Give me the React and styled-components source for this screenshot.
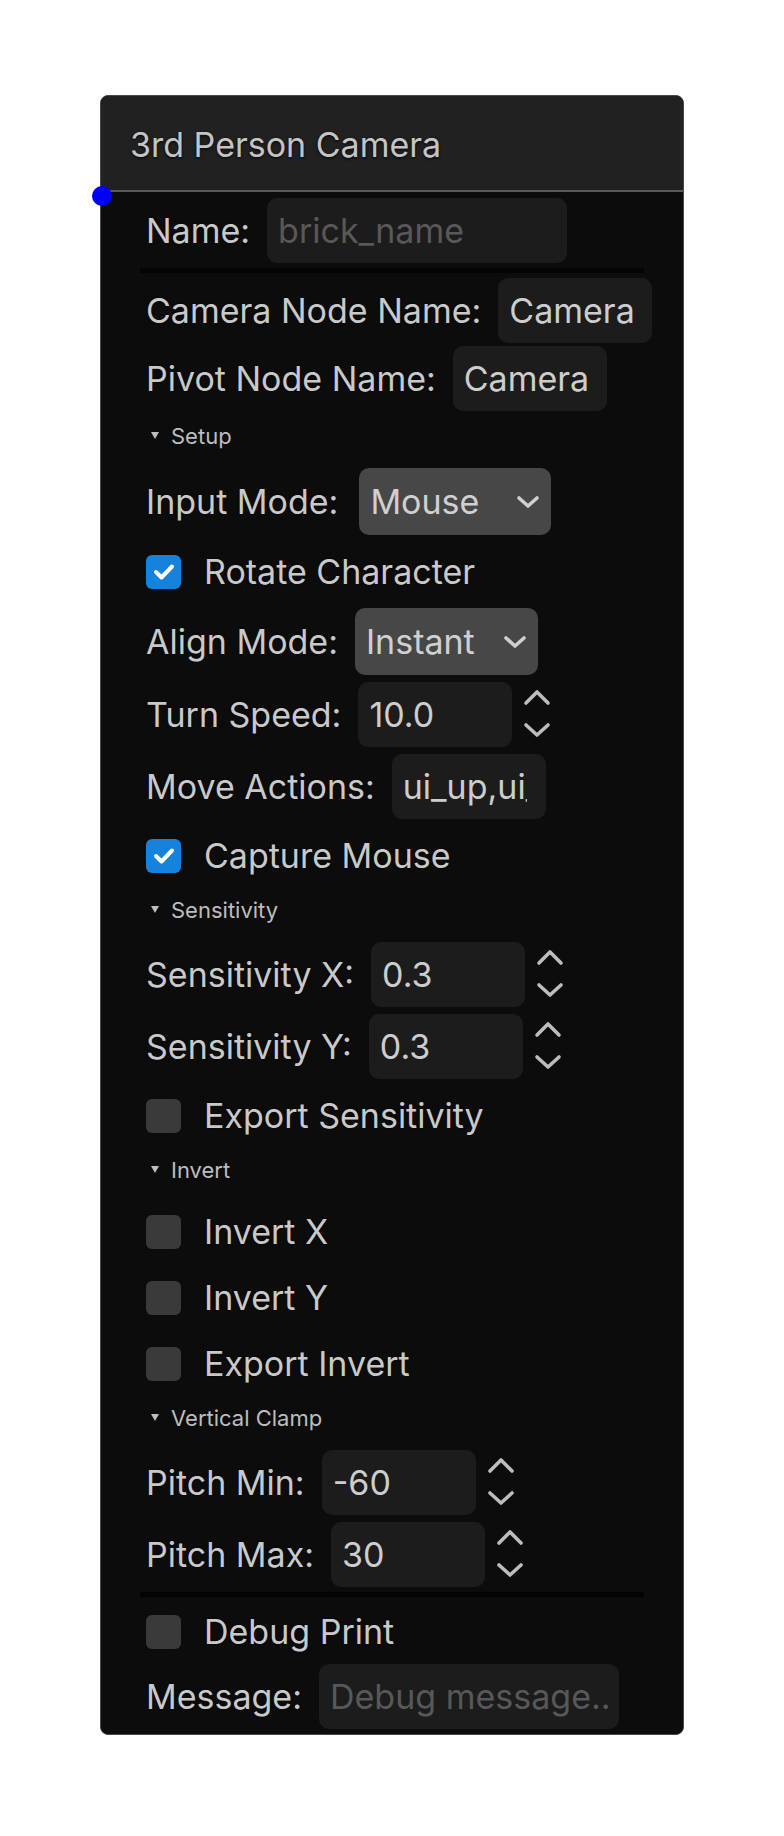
import React from 'react'
import styled, { createGlobalStyle } from 'styled-components'

const GlobalStyle = createGlobalStyle`
    body {
        margin: 0;
        background: #fff;
        font-family: Inter, "Noto Sans", sans-serif;
    }
`

const Page = styled.div`
    padding: 95px 0 0 100px;
`

const Panel = styled.div`
    position: relative;
    width: 582px;
    border: 1px solid #4a4a4a;
    border-radius: 8px;
    background: #0c0c0c;
`

const Header = styled.div`
    height: 96px;
    box-sizing: border-box;
    display: flex;
    align-items: center;
    padding: 3px 0 0 29px;
    background: #212121;
    border-bottom: 2px solid #5a5a5a;
    border-radius: 7px 7px 0 0;

    color: #c4c4c4;
    font-size: 34px;
    text-shadow: 0 1px 3px rgba(0, 0, 0, 0.9);
`

const Handle = styled.span`
    position: absolute;
    left: -9px;
    top: 90px;
    width: 20px;
    height: 20px;
    border-radius: 50%;
    background: #0000ff;
`

const Body = styled.div`
    display: flex;
    flex-direction: column;
    gap: 7px;
    padding: 6px 45px 5px;
`

const Group = styled.div`
    display: flex;
    flex-direction: column;
    gap: 3px;
`

const Divider = styled.div`
    height: 5px;
    margin: -2px -6px;
    background: #040404;
`

const Row = styled.div`
    height: ${p => p.$h || 65}px;
    display: flex;
    align-items: center;
    gap: ${p => (p.$tight ? 0 : 17)}px;
    white-space: nowrap;
`

const Label = styled.span`
    margin-left: ${p => p.$ml || 0}px;
    color: #c9c9c9;
    font-size: 34px;
    text-shadow: 0 0 2px rgba(0, 0, 0, 0.8);
`

const Field = styled.input`
    box-sizing: border-box;
    width: ${p => p.$w || 154}px;
    height: 65px;
    padding: 0 ${p => p.$pr || 19}px 0 11px;
    border: none;
    border-radius: 10px;
    outline: none;
    background: #1c1c1c;

    color: #cdcdcd;
    font-family: inherit;
    font-size: 34px;

    &::placeholder {
        color: #585858;
    }
`

const Select = styled.div`
    box-sizing: border-box;
    width: ${p => p.$w}px;
    height: 67px;
    margin-left: ${p => p.$ml || 0}px;
    padding: 0 11px;
    display: flex;
    align-items: center;
    justify-content: space-between;
    border-radius: 10px;
    background: #474747;

    color: #d0d0d0;
    font-size: 34px;
`

const Box = styled.span`
    flex: none;
    width: 35px;
    height: 34px;
    display: flex;
    align-items: center;
    justify-content: center;
    border-radius: 6px;
    background: ${p => (p.$on ? '#1682dc' : '#3a3a3a')};
`

const SectionHead = styled.div`
    height: 43px;
    box-sizing: border-box;
    padding: 2px 0 10px 5px;
    display: flex;
    align-items: center;
    gap: 12px;

    color: #bdbdbd;
    font-size: 22px;
`

const Chevron = () => (
    <svg width="24" height="14" viewBox="0 0 24 14">
        <polyline points="3,3 12,11 21,3" fill="none" stroke="#cfcfcf" strokeWidth="3.6" strokeLinecap="round" strokeLinejoin="round" />
    </svg>
)

const Spinner = () => (
    <svg width="28" height="65" viewBox="0 0 28 65" style={{ marginLeft: -6 }}>
        <polyline points="3,21 14,10 25,21" fill="none" stroke="#bdbdbd" strokeWidth="3.6" strokeLinecap="round" strokeLinejoin="round" />
        <polyline points="3,43 14,53 25,43" fill="none" stroke="#bdbdbd" strokeWidth="3.6" strokeLinecap="round" strokeLinejoin="round" />
    </svg>
)

const Check = ({ on, children }) => (
    <Row $h={59} $tight>
        <Box $on={on}>
            {on && (
                <svg width="24" height="20" viewBox="0 0 24 20">
                    <polyline points="4,10 9.5,15.5 20,4.5" fill="none" stroke="#fff" strokeWidth="4" strokeLinecap="round" strokeLinejoin="round" />
                </svg>
            )}
        </Box>
        <Label $ml={23}>{children}</Label>
    </Row>
)

const Section = ({ children }) => (
    <SectionHead>
        <svg width="8" height="7" viewBox="0 0 8 7">
            <polygon points="0,0 8,0 4,7" fill="#bdbdbd" />
        </svg>
        <span>{children}</span>
    </SectionHead>
)

const TextRow = ({ label, value, placeholder, w, pr }) => (
    <Row>
        <Label>{label}</Label>
        <Field $w={w} $pr={pr} defaultValue={value} placeholder={placeholder} />
    </Row>
)

const NumberRow = ({ label, value }) => (
    <Row>
        <Label>{label}</Label>
        <Field defaultValue={value} />
        <Spinner />
    </Row>
)

const SelectRow = ({ label, value, w, ml }) => (
    <Row $h={67}>
        <Label>{label}</Label>
        <Select $w={w} $ml={ml}>
            <span>{value}</span>
            <Chevron />
        </Select>
    </Row>
)

export default function App() {
    return (
        <Page>
            <GlobalStyle />
            <Panel>
                <Header>3rd Person Camera</Header>
                <Handle />
                <Body>
                    <TextRow label="Name:" placeholder="brick_name" w={300} pr={11} />
                    <Divider />
                    <Group>
                        <TextRow label="Camera Node Name:" value="Camera" />
                        <TextRow label="Pivot Node Name:" value="Camera" />
                    </Group>

                    <Section>Setup</Section>
                    <SelectRow label="Input Mode:" value="Mouse" w={192} ml={4} />
                    <Check on>Rotate Character</Check>
                    <SelectRow label="Align Mode:" value="Instant" w={183} />
                    <NumberRow label="Turn Speed:" value="10.0" />
                    <TextRow label="Move Actions:" value="ui_up,ui_down,ui_left,ui_right" />
                    <Check on>Capture Mouse</Check>

                    <Section>Sensitivity</Section>
                    <NumberRow label="Sensitivity X:" value="0.3" />
                    <NumberRow label="Sensitivity Y:" value="0.3" />
                    <Check>Export Sensitivity</Check>

                    <Section>Invert</Section>
                    <Check>Invert X</Check>
                    <Check>Invert Y</Check>
                    <Check>Export Invert</Check>

                    <Section>Vertical Clamp</Section>
                    <NumberRow label="Pitch Min:" value="-60" />
                    <NumberRow label="Pitch Max:" value="30" />
                    <Divider />
                    <Group>
                        <Check>Debug Print</Check>
                        <TextRow label="Message:" placeholder="Debug message..." w={300} pr={11} />
                    </Group>
                </Body>
            </Panel>
        </Page>
    )
}
